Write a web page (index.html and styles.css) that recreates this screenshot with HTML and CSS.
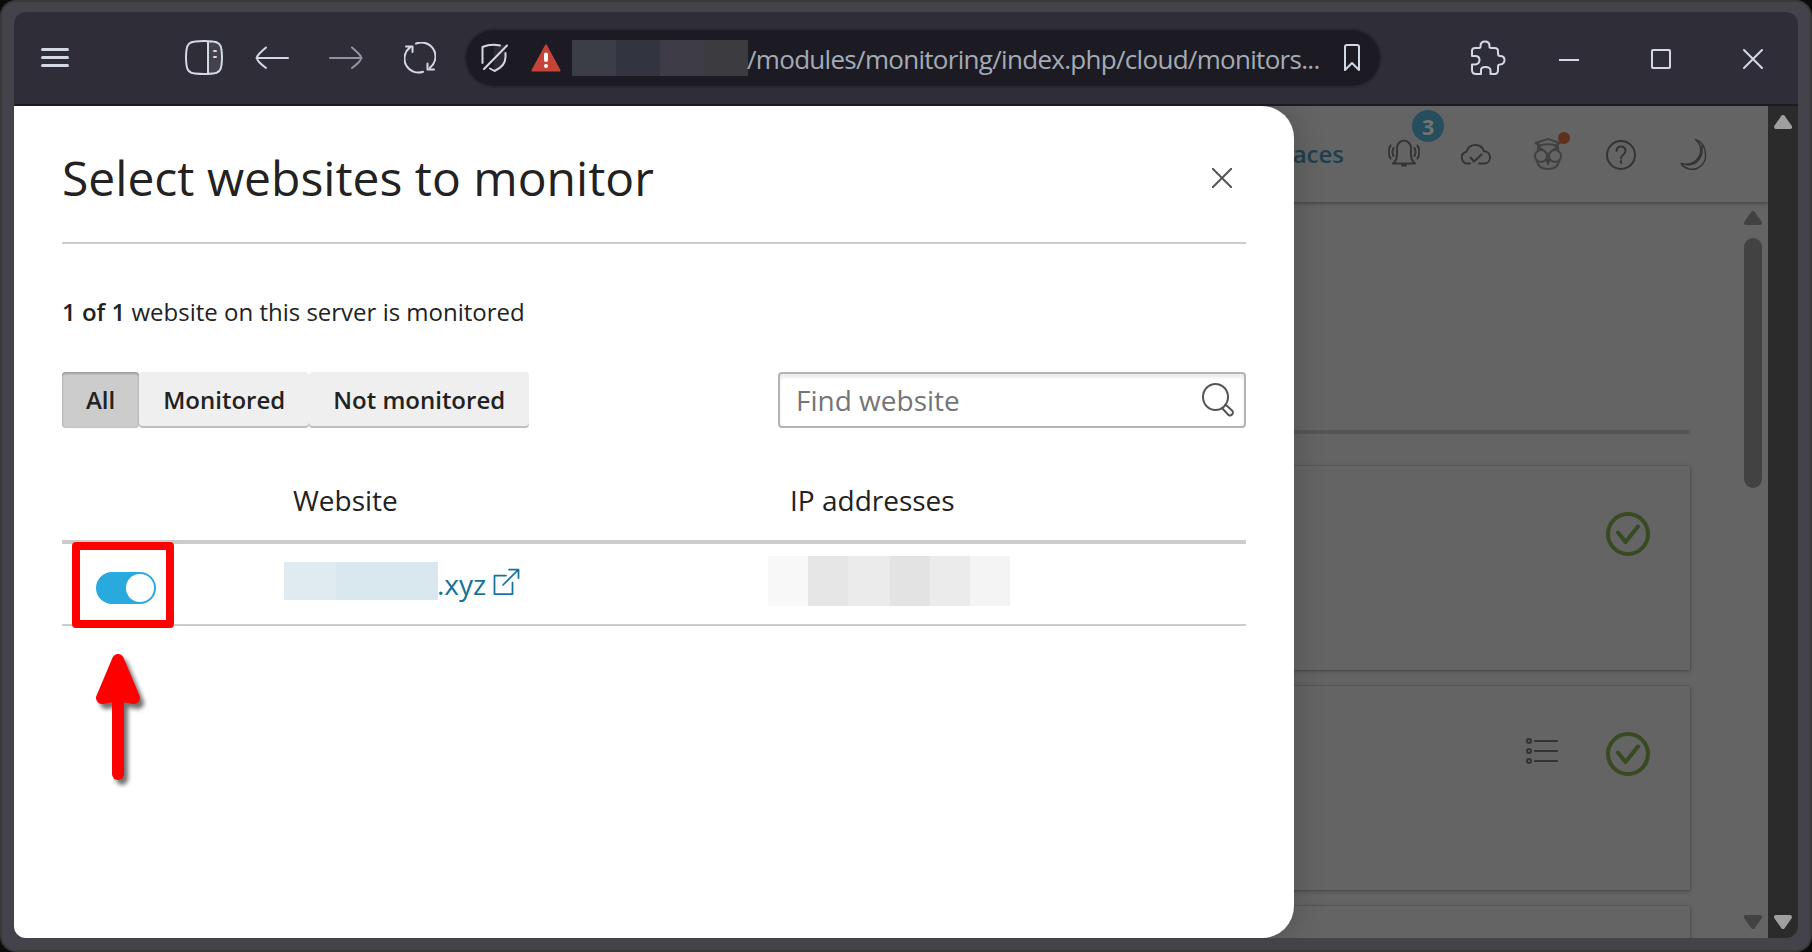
FILE: index.html
```html
<!DOCTYPE html>
<html lang="en">
<head>
  <meta charset="UTF-8" />
  <meta name="viewport" content="width=device-width, initial-scale=1.0"/>
  <title>Select websites to monitor</title>
  <link rel="stylesheet" href="styles.css">
</head>
<body>

  <div class="window">
    <!-- Browser toolbar -->
    <header class="toolbar">
      <svg class="menu-icon" width="28" height="20" viewBox="0 0 28 20"><path d="M1.5 1.5h25M1.5 9.5h25M1.5 17.5h25" stroke-width="3"/></svg>
      <svg class="panel-icon" width="38" height="36" viewBox="0 0 38 36">
        <path d="M23 2h6q8 0 8 8v15q0 8-8 8h-6z" fill="#43424b" stroke="none"/>
        <path d="M10 1.5Q19 .5 28 1.5Q36 2 36.500 10Q37.500 17.500 36.500 25Q36 33 28 33.500Q19 34.500 10 33.500Q2 33 1.500 25Q.5 17.500 1.500 10Q2 2 10 1.500zM23 2v31M29 11h2M29 17h2"/>
      </svg>
      <svg class="back-icon" width="34" height="24" viewBox="0 0 34 24"><path d="M33 12H1.500M11 1.500Q7 5 4 8Q0 12 4 16Q7 19 11 22"/></svg>
      <svg class="forward-icon" width="34" height="24" viewBox="0 0 34 24"><path d="M1 12h31.500M23 1.500Q27 5 30 8Q34 12 30 16Q27 19 23 22"/></svg>
      <svg class="reload-icon" width="32" height="32" viewBox="0 0 32 32"><path d="M12 1.600a14 14 0 0 1 14 24M19 29.800A14 14 0 0 1 6 5.400M2 4.500h6.500V10M30 27.500h-6.500V21.500"/></svg>

      <div class="url-bar">
        <svg width="28" height="30" viewBox="0 0 28 30">
          <path d="M13 2h11v12q0 8-11 13z" fill="#2c2b34" stroke="none"/>
          <path d="M1.500 20V4Q10 .5 19 2.500M24.500 10V14Q24.500 23 13.500 28L9 25.500M3 26L26 2.500"/>
        </svg>
        <svg class="warning-icon" width="30" height="28" viewBox="0 0 30 28">
          <path d="M15 1.500L28.500 26.500H1.500z" fill="#c64437" stroke="#c64437"/>
          <path d="M15 10.500v5.500M15 22v.1" stroke="#fff" stroke-width="4"/>
        </svg>
        <span class="url-mask"><i></i><i></i><i></i><i></i></span>
        <span class="url-text">/modules/monitoring/index.php/cloud/monitors...</span>
        <svg class="bookmark-icon" width="16" height="28" viewBox="0 0 16 28"><path d="M1 26V3q0-2 2-2h10q2 0 2 2v23l-7-7z"/></svg>
      </div>

      <svg class="puzzle-icon" width="36" height="36" viewBox="0 0 36 36"><path d="M2 16V11Q2 8 5 8H9Q11 8 10.500 6Q10.500 1.500 15 1.500T19.500 6Q19 8 21 8H24.500Q28 8 28 11V13.500Q28 16 30 16Q34.500 16 34.500 20T30 24.500Q28 24.500 28 26.500V30Q28 34 24.500 34H20.500V30Q20 27 15.500 27T11 30V34H6Q2 34 2 30V24.500H5Q9.500 24 9.500 20T5 16z"/></svg>
      <svg class="minimize-icon" width="20" height="20" viewBox="0 0 20 20"><path d="M0 11h20"/></svg>
      <svg class="maximize-icon" width="20" height="20" viewBox="0 0 20 20"><rect x="1" y="1" width="18" height="18" rx="1"/></svg>
      <svg class="maximize-icon" width="20" height="20" viewBox="0 0 20 20"><path d="M1 1l18 18M19 1L1 19"/></svg>
    </header>

    <div class="viewport">
      <!-- Page behind the drawer -->
      <div class="page">
        <div class="page-header">
          <span class="page-link">aces</span>
          <div class="bell">
            <svg width="32" height="32" viewBox="0 0 32 32"><path d="M5 25.500H27Q23 22 23 17V10a7 7.500 0 0 0-14 0V17Q9 22 5 25.500zM14 27.500h4M5.500 10q-2 4 0 8M2.500 7.500q-3.500 6.500 0 13M26.500 10q2 4 0 8M29.500 7.500q3.500 6.500 0 13"/></svg>
            <span class="badge">3</span>
          </div>
          <svg width="32" height="32" viewBox="0 0 32 32"><path d="M10 25.500H7A6 6 0 0 1 6.500 13.700Q8.500 7 15.500 7Q22 7 24 13.200A6.200 6.200 0 0 1 25 25.500H19M10.500 19.500L14 23.500L21.500 16.500"/></svg>
          <div class="owl">
            <svg width="32" height="32" viewBox="0 0 32 32"><path d="M16 1L28 5L24 7V12M16 1L3.500 5L8 7V12M8 7.500Q16 5 24 7.500M6 8v5.500M26 8v5.500M10 11Q16 15 16 19M22 11Q16 15 16 19M4.500 22Q6 31 16 31T27.500 22"/><circle cx="9" cy="18" r="6"/><circle cx="23" cy="18" r="6"/><path d="M13.500 22L16 28L18.500 22L16 20z" fill="#3d3d3d" stroke="none"/></svg>
            <span class="dot"></span>
          </div>
          <svg width="32" height="32" viewBox="0 0 32 32"><circle cx="17" cy="17" r="14"/><path d="M12.500 13Q12.500 8.500 17 8.500T21.500 13Q21.500 15 19 17Q17 18.500 17 20.500M17 23v2"/></svg>
          <svg class="moon-icon" width="32" height="32" viewBox="0 0 32 32"><path d="M19.500 1.500A14 14 0 0 1 29.300 15A13.500 13.500 0 0 1 5 25.500Q14 28 20.500 22C27 15.500 25.500 6.500 19.500 1.500M25.800 8C27.500 20 20 28 10 26.800"/></svg>
        </div>

        <div class="page-body">
          <div class="page-content">
            <div class="section-head"></div>
            <div class="card">
              <svg width="44" height="44" viewBox="0 0 44 44"><circle cx="22" cy="22" r="20"/><path d="M12 20.500L19.500 30L32 14.500"/></svg>
            </div>
            <div class="card">
              <svg class="list-icon" width="32" height="26" viewBox="0 0 32 26"><circle cx="3" cy="3" r="2"/><circle cx="3" cy="13" r="2"/><circle cx="3" cy="23" r="2"/><path d="M9 3h22M9 13h22M9 23h22"/></svg>
              <svg width="44" height="44" viewBox="0 0 44 44"><circle cx="22" cy="22" r="20"/><path d="M12 20.500L19.500 30L32 14.500"/></svg>
            </div>
            <div class="card"></div>
          </div>
          <div class="scroll-inner">
            <svg width="18" height="14" viewBox="0 0 18 14"><path d="M9 2L16 12H2z"/></svg>
            <div class="thumb"></div>
            <svg class="down" width="18" height="14" viewBox="0 0 18 14"><path d="M9 12L2 2h14z"/></svg>
          </div>
        </div>
      </div>

      <div class="scroll-outer">
        <svg width="18" height="14" viewBox="0 0 18 14"><path d="M9 2L16 12H2z"/></svg>
        <svg width="18" height="14" viewBox="0 0 18 14"><path d="M9 12L2 2h14z"/></svg>
      </div>

      <!-- Drawer -->
      <main class="drawer">
        <div class="drawer-header">
          <h1>Select websites to monitor</h1>
          <svg class="close-icon" width="20" height="20" viewBox="0 0 20 20"><path d="M.5.5l19 19M19.500.5l-19 19"/></svg>
        </div>

        <p class="summary"><strong>1 of 1</strong> website on this server is monitored</p>

        <div class="filters">
          <div class="segments">
            <button class="segment active">All</button>
            <button class="segment">Monitored</button>
            <button class="segment">Not monitored</button>
          </div>
          <div class="search">
            <input type="text" placeholder="Find website">
            <svg width="32" height="34" viewBox="0 0 32 34"><ellipse cx="13.500" cy="14" rx="12.500" ry="13"/><path d="M20 25l6.500 7q2 1 3.500-.5t.5-3.500L23.500 21.500"/></svg>
          </div>
        </div>

        <div class="table-head">
          <span>Website</span>
          <span>IP addresses</span>
        </div>
        <div class="table-row">
          <span class="toggle"></span>
          <span class="site">
            <span class="site-mask"></span>
            <span class="site-name">.xyz</span>
            <svg width="28" height="28" viewBox="0 0 28 28"><path d="M14 7.500H2.500V26H20.500V14.500M11 17L26 2M17 1.500h9.500V10"/></svg>
          </span>
          <span class="ip-mask"><i></i><i></i><i></i><i></i><i></i><i></i></span>
          <span class="highlight"></span>
          <svg class="pointer" width="60" height="140" viewBox="0 0 60 140">
            <path d="M28 12L44 50L28 47L12 50z" stroke-width="12"/>
            <path d="M28 45V126" stroke-width="12"/>
          </svg>
        </div>
      </main>
    </div>
  </div>

</body>
</html>
```
FILE: styles.css
```css
* {
  box-sizing: border-box;
}

body {
  margin: 0;
  height: 952px;
  background: #0c0c0c;
  font-family: "Open Sans", sans-serif;
  color: #222;
  overflow: hidden;
}

svg {
  display: block;
  flex: none;
  fill: none;
  stroke-width: 2;
  stroke-linecap: round;
  stroke-linejoin: round;
}

.window {
  height: 952px;
  padding: 10px 12px 12px;
  border: 2px solid #393939;
  border-radius: 16px;
  background: #44434c;
}

/* Browser toolbar */
.toolbar {
  display: flex;
  align-items: center;
  height: 94px;
  background: #2f2e38;
  border-bottom: 2px solid #1c1b24;
  border-radius: 12px 12px 0 0;
}

.toolbar svg {
  stroke: #d3d8e4;
}

.menu-icon {
  margin-left: 27px;
}

.panel-icon {
  margin-left: 116px;
}

.back-icon {
  margin-left: 32px;
}

.forward-icon {
  margin-left: 40px;
  opacity: 0.6;
}

.reload-icon {
  margin-left: 41px;
}

.url-bar {
  display: flex;
  align-items: center;
  width: 914px;
  height: 56px;
  margin-left: 30px;
  padding: 0 20px 0 15px;
  border-radius: 28px;
  background: #1c1b24;
  box-shadow: 0 0 0 2px #292832;
}

.warning-icon {
  margin-left: 22px;
}

.url-mask {
  display: flex;
  height: 36px;
  margin-left: 11px;
}

.url-mask i {
  width: 44px;
  background: #3b3e47;
}

.url-mask i:nth-child(2) {
  background: #32353f;
}

.url-mask i:nth-child(3) {
  background: #3e3d47;
}

.url-mask i:nth-child(4) {
  background: #3c3b3f;
}

.url-text {
  flex: 1;
  margin-left: -1px;
  padding-top: 2px;
  white-space: nowrap;
  font-size: 26px;
  letter-spacing: -0.7px;
  color: #a5abb5;
}

.puzzle-icon {
  margin-left: 90px;
}

.minimize-icon {
  margin-left: 53px;
  margin-top: 2px;
}

.maximize-icon {
  margin-left: 72px;
  margin-top: 2px;
}

/* Page */
.viewport {
  position: relative;
  display: flex;
  height: 832px;
  overflow: hidden;
  border-radius: 0 0 12px 12px;
}

.page {
  flex: 1;
  display: flex;
  flex-direction: column;
  background: #646464;
}

.page-header {
  display: flex;
  justify-content: flex-end;
  align-items: center;
  gap: 40px;
  height: 96px;
  padding-right: 60px;
  box-shadow: 0 1px 4px rgba(0, 0, 0, 0.4);
}

.page-header svg {
  stroke: #343434;
}

.page-header .moon-icon {
  stroke-width: 1.5;
}

.page-link {
  margin-right: 4px;
  padding-bottom: 2px;
  font-size: 24px;
  font-weight: 600;
  color: #1d404f;
}

.bell,
.owl {
  position: relative;
}

.page-header .owl svg {
  stroke: #424242;
}

.badge {
  position: absolute;
  left: 24px;
  top: -28px;
  width: 32px;
  height: 32px;
  border-radius: 50%;
  background: #264e5f;
  color: #727272;
  font-size: 22px;
  font-weight: 700;
  line-height: 33px;
  text-align: center;
}

.dot {
  position: absolute;
  left: 26px;
  top: -6px;
  width: 12px;
  height: 12px;
  border-radius: 50%;
  background: #5f301c;
}

.page-body {
  flex: 1;
  display: flex;
  justify-content: space-between;
  min-height: 0;
}

.page-content {
  width: 1682px;
  padding-right: 6px;
  overflow: hidden;
}

.section-head {
  height: 232px;
  border-bottom: 4px solid #565656;
}

.card {
  display: flex;
  justify-content: flex-end;
  gap: 48px;
  height: 204px;
  margin-top: 16px;
  padding: 46px 40px 0 0;
  box-shadow: 0 1px 4px rgba(0, 0, 0, 0.3), 0 0 1px rgba(0, 0, 0, 0.3);
}

.section-head + .card {
  margin-top: 32px;
}

.card svg {
  stroke: #384a21;
  stroke-width: 4;
}

.card .list-icon {
  margin-top: 6px;
  stroke: #333;
  stroke-width: 2;
}

/* Scrollbars */
.scroll-inner {
  display: flex;
  flex-direction: column;
  width: 18px;
  margin-right: 6px;
  padding: 9px 0;
}

.scroll-inner svg {
  fill: #424242;
  stroke: #424242;
  stroke-width: 4;
}

.thumb {
  height: 250px;
  margin-top: 13px;
  border-radius: 9px;
  background: #424242;
}

.scroll-inner .down {
  margin-top: auto;
}

.scroll-outer {
  display: flex;
  flex-direction: column;
  align-items: center;
  justify-content: space-between;
  width: 30px;
  padding: 9px 0;
  background: #2b2b2b;
}

.scroll-outer svg {
  fill: #9f9f9f;
  stroke: #9f9f9f;
  stroke-width: 4;
}

/* Drawer */
.drawer {
  position: absolute;
  left: 0;
  top: 0;
  width: 1280px;
  height: 832px;
  padding: 0 48px;
  background: #fff;
  border-radius: 0 32px 32px 0;
  box-shadow: 0 0 32px rgba(0, 0, 0, 0.2);
}

.drawer-header {
  display: flex;
  justify-content: space-between;
  align-items: center;
  height: 138px;
  padding: 8px 14px 0 0;
  border-bottom: 2px solid #ccc;
}

h1 {
  margin: 0;
  font-size: 48px;
  font-weight: 400;
  line-height: 60px;
}

.close-icon {
  stroke: #555;
}

.summary {
  margin: 52px 0 44px;
  font-size: 24px;
  line-height: 32px;
}

.summary strong {
  font-weight: 600;
}

.filters {
  display: flex;
  justify-content: space-between;
}

.segments {
  display: flex;
}

.segment {
  height: 56px;
  padding: 0 24px 2px;
  border: none;
  border-radius: 4px;
  background: #efefef;
  box-shadow: inset 0 -2px 0 #bfbfbf;
  color: #222;
  font-family: inherit;
  font-size: 24px;
  font-weight: 600;
}

.segment.active {
  background: #ccc;
  box-shadow: inset 0 2px 2px #a0a0a0, inset 0 0 2px #b0b0b0;
}

.search {
  display: flex;
  align-items: center;
  width: 468px;
  height: 56px;
  padding: 0 10px 0 16px;
  border: 2px solid #b3b3b3;
  border-radius: 4px;
  box-shadow: inset 0 4px 3px #eee;
}

.search input {
  flex: 1;
  min-width: 0;
  padding: 0;
  border: none;
  outline: none;
  background: none;
  font-family: inherit;
  font-size: 28px;
}

.search input::placeholder {
  color: #757575;
}

.search svg {
  stroke: #555;
}

.table-head {
  display: grid;
  grid-template-columns: 497px 1fr;
  padding: 54px 0 22px 231px;
  border-bottom: 4px solid #ccc;
  font-size: 28px;
  line-height: 36px;
}

.table-row {
  position: relative;
  display: grid;
  grid-template-columns: 188px 484px 1fr;
  height: 82px;
  padding-left: 34px;
  border-bottom: 2px solid #ccc;
}

.toggle {
  width: 60px;
  height: 32px;
  margin-top: 28px;
  padding: 2px;
  border-radius: 16px;
  background: #28aade;
}

.toggle::after {
  content: "";
  display: block;
  width: 28px;
  height: 28px;
  margin-left: auto;
  border-radius: 50%;
  background: #fff;
}

.site {
  display: flex;
  height: 80px;
  line-height: 80px;
  font-size: 28px;
  color: #15739b;
}

.site-mask {
  width: 154px;
  height: 38px;
  margin-top: 18px;
  background: linear-gradient(90deg, #dfebf1 52px, #d9e7ee 52px);
}

.site-name {
  margin-left: -1px;
}

.site svg {
  margin: 24px 0 0 6px;
  stroke: #15739b;
  stroke-width: 1.75;
}

.ip-mask {
  display: flex;
  height: 50px;
  margin-top: 12px;
}

.ip-mask i {
  width: 40px;
  background: #ebebeb;
}

.ip-mask i:nth-child(1) {
  background: #f8f8f8;
}

.ip-mask i:nth-child(2) {
  background: #e6e6e6;
}

.ip-mask i:nth-child(3) {
  width: 42px;
}

.ip-mask i:nth-child(4) {
  background: #e3e3e3;
}

.ip-mask i:nth-child(6) {
  background: #f4f4f4;
}

/* Red marker and arrow over the toggle */
.highlight {
  position: absolute;
  left: 10px;
  top: -2px;
  width: 102px;
  height: 86px;
  border: 8px solid #f00;
  border-radius: 4px;
}

.pointer {
  position: absolute;
  left: 28px;
  top: 104px;
  fill: #f00;
  stroke: #f00;
  filter: drop-shadow(4px 5px 2px rgba(0, 0, 0, 0.55));
}
```
